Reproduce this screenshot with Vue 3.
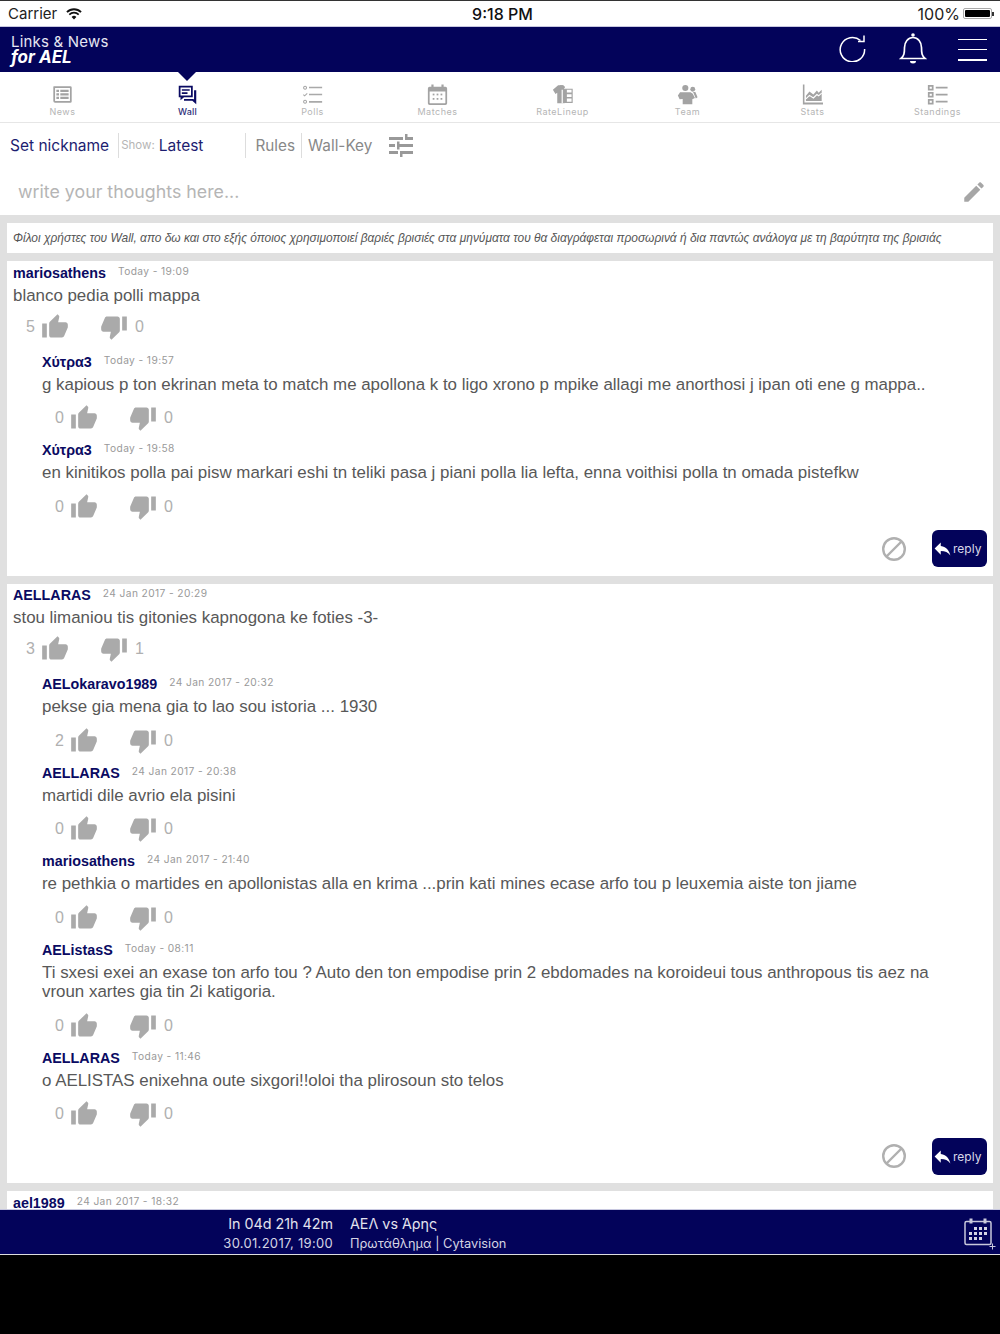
<template>
  <div class="app">
    <div class="status">
      <span class="carrier">Carrier</span>
      <svg class="wifi" viewBox="0 0 16 12"><path d="M8 11.5 5.6 8.9a3.4 3.4 0 0 1 4.8 0zM3.9 7.2 2.7 5.9a7.6 7.6 0 0 1 10.6 0l-1.2 1.3a5.9 5.9 0 0 0-8.2 0zM1.6 4.8.3 3.5a11 11 0 0 1 15.4 0l-1.3 1.3a9.2 9.2 0 0 0-12.8 0z" fill="#111"/></svg>
      <span class="clock">9:18 PM</span>
      <span class="pct">100%</span>
      <span class="battery"><i></i></span>
    </div>

    <header class="topbar">
      <div class="brand">
        <div>Links &amp; News</div>
        <div class="brand-sub">for AEL</div>
      </div>
      <svg class="refresh" viewBox="0 0 27 28" fill="none" stroke="#fff" stroke-width="1.5"><path d="M21.5 6.5A12.2 12.2 0 1 0 25.6 15"/><path d="M25 1.5v6h-6"/></svg>
      <svg class="bell" viewBox="0 0 28 32" fill="none" stroke="#fff" stroke-width="1.7"><path d="M2 26.5c3-2.6 3.5-5 3.5-11 0-5.500 3.500-10 8.500-10s8.500 4.500 8.500 10c0 6 .5 8.400 3.500 11z"/><circle cx="14" cy="3" r="1.8" fill="#fff" stroke="none"/><path d="M11 29h6a3 2.5 0 0 1-6 0z" fill="#fff" stroke="none"/></svg>
      <div class="burger"><i></i><i></i><i></i></div>
    </header>

    <nav class="tabs">
      <div v-for="t in tabs" :key="t.name" class="tab" :class="{ active: t.name === 'Wall' }">
        <svg class="tab-icon" viewBox="0 0 24 24" v-html="t.icon"></svg>
        <span>{{ t.name }}</span>
      </div>
    </nav>

    <div class="toolbar">
      <span class="link nick">Set nickname</span>
      <span class="sep"></span>
      <span class="show">Show:</span>
      <span class="link latest">Latest</span>
      <span class="sep sep-b"></span>
      <span class="plain rules">Rules</span>
      <span class="sep sep-c"></span>
      <span class="plain">Wall-Key</span>
      <svg class="tune" viewBox="0 0 24 24" fill="#999">
        <rect x="0" y="4" width="14" height="3"/><rect x="16" y="1" width="2.5" height="6"/><rect x="16" y="4" width="8" height="3"/>
        <rect x="0" y="11" width="6" height="3"/><rect x="8" y="8.5" width="2.5" height="8"/><rect x="8" y="11" width="16" height="3"/>
        <rect x="0" y="18" width="9" height="3"/><rect x="11" y="18" width="2.5" height="6"/><rect x="11" y="18" width="13" height="3"/>
      </svg>
    </div>

    <div class="compose">
      <span>write your thoughts here...</span>
      <svg class="pencil" viewBox="0 0 24 24" fill="#a6a6a6"><path d="M3 17.25V21h3.75L17.81 9.94l-3.75-3.75L3 17.25zM20.71 7.04c.39-.39.39-1.02 0-1.41l-2.34-2.34c-.39-.39-1.02-.39-1.41 0l-1.83 1.83 3.75 3.75 1.83-1.83z"/></svg>
    </div>

    <main class="wall">
      <div class="notice">Φίλοι χρήστες του Wall, απο δω και στο εξής όποιος χρησιμοποιεί βαριές βρισιές στα μηνύματα του θα διαγράφεται προσωρινά ή δια παντώς ανάλογα με τη βαρύτητα της βρισιάς</div>

      <section v-for="p in posts" :key="p.name + p.time" class="post">
        <article class="msg">
          <div class="head"><b>{{ p.name }}</b><time>{{ p.time }}</time></div>
          <template v-if="p.text">
            <p>{{ p.text }}</p>
            <div class="votes">
              <span class="n-up">{{ p.up }}</span>
              <svg viewBox="0 0 24 24"><path :d="thumbUp"/></svg>
              <svg class="down" viewBox="0 0 24 24"><path :d="thumbDown"/></svg>
              <span class="n-down">{{ p.down }}</span>
            </div>
          </template>
        </article>
        <article v-for="c in p.replies" :key="c.name + c.time" class="msg sub">
          <div class="head"><b>{{ c.name }}</b><time>{{ c.time }}</time></div>
          <p>{{ c.text }}</p>
          <div class="votes">
            <span class="n-up">{{ c.up }}</span>
            <svg viewBox="0 0 24 24"><path :d="thumbUp"/></svg>
            <svg class="down" viewBox="0 0 24 24"><path :d="thumbDown"/></svg>
            <span class="n-down">{{ c.down }}</span>
          </div>
        </article>
        <div v-if="p.text" class="actions">
          <svg class="ban" viewBox="0 0 26 26" fill="none" stroke="#b0b0b0" stroke-width="2.4"><circle cx="13" cy="13" r="10.8"/><path d="M5.5 20.5 20.5 5.5"/></svg>
          <button class="reply">
            <svg viewBox="0 0 24 24" fill="#fff"><path d="M10 9V5l-7 7 7 7v-4.1c5 0 8.5 1.6 11 5.1-1-5-4-10-11-11z"/></svg>
            reply
          </button>
        </div>
      </section>
    </main>

    <footer class="next">
      <div class="when">
        <div class="big">In 04d 21h 42m</div>
        <div class="small">30.01.2017, 19:00</div>
      </div>
      <div class="what">
        <div class="big">ΑΕΛ vs Άρης</div>
        <div class="small">Πρωτάθλημα | Cytavision</div>
      </div>
      <svg class="cal" viewBox="0 0 32 32" fill="none" stroke="#c9c9dc">
        <rect x="1" y="3.5" width="26" height="23" rx="1.5" stroke-width="1.5"/>
        <path d="M7 .5v5M21 .5v5" stroke-width="3"/>
        <g fill="#d5d5e4" stroke="none">
          <rect x="10" y="9" width="3" height="3"/><rect x="15" y="9" width="3" height="3"/><rect x="20" y="9" width="3" height="3"/>
          <rect x="5" y="14" width="3" height="3"/><rect x="10" y="14" width="3" height="3"/><rect x="15" y="14" width="3" height="3"/><rect x="20" y="14" width="3" height="3"/>
          <rect x="5" y="19" width="3" height="3"/><rect x="10" y="19" width="3" height="3"/><rect x="15" y="19" width="3" height="3"/>
        </g>
        <path d="M28.5 25.5v6M25.5 28.5h6" stroke-width="1"/>
      </svg>
    </footer>
    <div class="black"></div>
  </div>
</template>

<script setup>
const thumbUp = 'M1 21h4V9H1v12zm22-11c0-1.1-.9-2-2-2h-6.31l.95-4.57.03-.32c0-.41-.17-.79-.44-1.06L14.17 1 7.59 7.59C7.22 7.95 7 8.45 7 9v10c0 1.1.9 2 2 2h9c.83 0 1.54-.5 1.84-1.22l3.02-7.05c.09-.23.14-.47.14-.73v-2z'
const thumbDown = 'M15 3H6c-.83 0-1.54.5-1.84 1.22l-3.02 7.05c-.09.23-.14.47-.14.73v2c0 1.1.9 2 2 2h6.31l-.95 4.57-.03.32c0 .41.17.79.44 1.06L9.83 23l6.59-6.59c.36-.36.58-.86.58-1.41V5c0-1.1-.9-2-2-2zm4 0v12h4V3h-4z'

const g = 'fill="#a3a3a3"'
const tabs = [
  { name: 'News', icon: `<path ${g} fill-rule="evenodd" d="M2 2.5h19a1.5 1.5 0 0 1 1.5 1.5v16a1.5 1.5 0 0 1-1.5 1.5H3.5a2 2 0 0 1-2-2V3zM3.500 4.500v15h17v-15z"/><path ${g} d="M5 6.500h3V9H5zM9.500 6.500H19V9H9.500zM5 10.500h3V13H5zM9.500 10.500H19V13H9.500zM5 14.500h3V17H5zM9.500 14.500H19V17H9.500z"/>` },
  { name: 'Wall', icon: `<path fill="#0a0a62" fill-rule="evenodd" d="M2 2h16v13H8l-4 3.500V15H2zM4 4v9h12V4z"/><path fill="#0a0a62" d="M5.500 6h9v1.800h-9zM5.500 9.500H12v1.800H5.500zM19.500 7H22v16l-4.500-4H8v-2h10.500l1 .8z"/>` },
  { name: 'Polls', icon: `<path fill="none" stroke="#a9a9a9" stroke-width="1.200" d="M3.500 2.500a1.700 1.700 0 1 0 .01 0zM3.500 18.500a1.700 1.700 0 1 0 .01 0zM1.500 12.200 3 13.500l3-2.800"/><path fill="#a9a9a9" d="M8 3h15v1.800H8zM8 11h15v1.800H8zM8 19.500h15v1.800H8z"/>` },
  { name: 'Matches', icon: `<path ${g} fill-rule="evenodd" d="M5 .5h2.500V3h9V.5H19V3h2a2 2 0 0 1 2 2v17a2 2 0 0 1-2 2H3a2 2 0 0 1-2-2V5a2 2 0 0 1 2-2h2zM3 8.500v13a.5.5 0 0 0 .5.5h17a.5.5 0 0 0 .5-.5v-13z"/><g fill="#a3a3a3"><rect x="6.500" y="11" width="2" height="2"/><rect x="11" y="11" width="2" height="2"/><rect x="15.500" y="11" width="2" height="2"/><rect x="6.500" y="16" width="2" height="2"/><rect x="11" y="16" width="2" height="2"/><rect x="15.500" y="16" width="2" height="2"/></g>` },
  { name: 'RateLineup', icon: `<path ${g} d="M7 1.500h6l1.500 1.500v19H6V10l-2 1.500-3-5z"/><path fill="#fff" d="M11 4.500h13V22H11z"/><path fill="none" stroke="#a3a3a3" stroke-width="1.300" d="M13 6h10v4.500H13zM13 11h10v4.500H13zM13 16h10v5H13z"/><path ${g} d="M9 1.500h3L14.500 3l-1 3.500H9zM13 6h4v4.500h-4zM13 11h4v4.500h-4zM13 16h4v5h-4z"/>` },
  { name: 'Team', icon: `<circle ${g} cx="9.500" cy="4.500" r="3.500"/><circle ${g} cx="18" cy="6" r="2.800"/><path ${g} d="M3.500 9.500h12l2.500 1.500 2.500 5-3 1.500V23H6.500v-6L3 17.500 1 13zM18 9h3l2.500 6-2 1.500-3-7z"/>` },
  { name: 'Stats', icon: `<path ${g} d="M1 .5h1.800V21H24v2.500H1z"/><path ${g} d="M4.500 19.500v-6l4-5 4.500 3.500 4-4.500 2 2.500L22.500 6.500v13z"/><path fill="none" stroke="#fff" stroke-width="1.300" d="M4.500 17l4-4 4.500 3 4-4 2 1.500 3.500-3"/>` },
  { name: 'Standings', icon: `<g fill="#a3a3a3"><path fill-rule="evenodd" d="M1 1h6.500v6.500H1zM3 3v2.500h2.500V3z"/><path fill-rule="evenodd" d="M1 9h6.500v6.500H1zM3 11v2.500h2.500V11z"/><path fill-rule="evenodd" d="M1 17h6.500v6.500H1zM3 19v2.500h2.500V19z"/><path d="M10 3.200h13.500V5H10zM10 11.200h13.500V13H10zM10 19.200h13.500V21H10z"/></g>` }
]

const posts = [
  {
    name: 'mariosathens', time: 'Today - 19:09', text: 'blanco pedia polli mappa', up: 5, down: 0,
    replies: [
      { name: 'Χύτρα3', time: 'Today - 19:57', text: 'g kapious p ton ekrinan meta to match me apollona k to ligo xrono p mpike allagi me anorthosi j ipan oti ene g mappa..', up: 0, down: 0 },
      { name: 'Χύτρα3', time: 'Today - 19:58', text: 'en kinitikos polla pai pisw markari eshi tn teliki pasa j piani polla lia lefta, enna voithisi polla tn omada pistefkw', up: 0, down: 0 }
    ]
  },
  {
    name: 'AELLARAS', time: '24 Jan 2017 - 20:29', text: 'stou limaniou tis gitonies kapnogona ke foties -3-', up: 3, down: 1,
    replies: [
      { name: 'AELokaravo1989', time: '24 Jan 2017 - 20:32', text: 'pekse gia mena gia to lao sou istoria ... 1930', up: 2, down: 0 },
      { name: 'AELLARAS', time: '24 Jan 2017 - 20:38', text: 'martidi dile avrio ela pisini', up: 0, down: 0 },
      { name: 'mariosathens', time: '24 Jan 2017 - 21:40', text: 're pethkia o martides en apollonistas alla en krima ...prin kati mines ecase arfo tou p leuxemia aiste ton jiame', up: 0, down: 0 },
      { name: 'AEListasS', time: 'Today - 08:11', text: 'Ti sxesi exei an exase ton arfo tou ? Auto den ton empodise prin 2 ebdomades na koroideui tous anthropous tis aez na vroun xartes gia tin 2i katigoria.', up: 0, down: 0 },
      { name: 'AELLARAS', time: 'Today - 11:46', text: 'o AELISTAS enixehna oute sixgori!!oloi tha plirosoun sto telos', up: 0, down: 0 }
    ]
  },
  { name: 'ael1989', time: '24 Jan 2017 - 18:32', text: '', replies: [] }
]
</script>

<style>
html, body { margin: 0; background: #000; }
</style>

<style scoped>
.app {
  width: 1000px;
  height: 1334px;
  display: flex;
  flex-direction: column;
  overflow: hidden;
  font-family: "Liberation Sans", Arial, sans-serif;
  background: #fff;
}

.status {
  height: 25px;
  flex: none;
  display: flex;
  align-items: center;
  position: relative;
  border-top: 1px solid #333;
  border-bottom: 1px solid #c8c8e0;
  padding: 0 8px;
  font-family: Inter, sans-serif;
  font-size: 15px;
  color: #222;
}
.wifi { width: 16px; height: 12px; margin-left: 9px; }
.clock {
  position: absolute;
  left: 0;
  right: 0;
  padding-left: 5px;
  text-align: center;
  font-size: 16px;
  font-weight: 500;
  color: #111;
}
.pct { margin-left: auto; margin-right: 3px; font-size: 16px; }
.battery {
  width: 29px;
  height: 11px;
  border: 1px solid #aaa;
  border-radius: 2px;
  padding: 1px;
  box-sizing: border-box;
  position: relative;
}
.battery i { display: block; height: 100%; background: #000; border-radius: 1px; }
.battery::after {
  content: "";
  position: absolute;
  right: -3px;
  top: 3px;
  width: 2px;
  height: 4px;
  background: #333;
}

.topbar {
  height: 45px;
  flex: none;
  display: flex;
  align-items: center;
  background: #03035a;
  color: #fff;
  padding: 0 13px 0 11px;
}
.brand {
  font-family: Inter, sans-serif;
  font-size: 15px;
  line-height: 16px;
  letter-spacing: .2px;
  color: #e6e6f2;
  margin-right: auto;
}
.brand-sub { font-size: 17px; line-height: 15px; font-weight: 700; font-style: italic; color: #fff; letter-spacing: 0; }
.refresh { width: 27px; height: 28px; margin: 0 33px 4px 0; }
.bell { width: 28px; height: 32px; margin: 0 31px 3px 0; }
.burger { width: 29px; height: 22px; display: flex; flex-direction: column; justify-content: space-between; }
.burger i { height: 1.5px; background: #fff; }

.tabs {
  height: 50px;
  flex: none;
  display: grid;
  grid-template-columns: repeat(8, 125px);
  border-bottom: 1px solid #e6e6e6;
}
.tab {
  display: flex;
  flex-direction: column;
  align-items: center;
  padding-top: 12px;
  font-family: Inter, sans-serif;
  font-size: 9px;
  line-height: 10px;
  letter-spacing: .5px;
  color: #b5b5b5;
  position: relative;
}
.tab-icon { width: 21px; height: 21px; margin-bottom: 2px; }
.tab.active { color: #2c2c78; font-weight: 500; letter-spacing: .2px; }
.tab.active::before {
  content: "";
  position: absolute;
  top: 0;
  left: 53px;
  border: 9px solid transparent;
  border-bottom: 0;
  border-top-color: #03035a;
}

.toolbar {
  height: 44px;
  flex: none;
  display: flex;
  align-items: center;
  padding: 0 0 1px 10px;
  font-family: Inter, sans-serif;
  font-size: 15.5px;
}
.link { color: #1d1d70; }
.sep { width: 1px; height: 25px; background: #ddd; margin: 0 2px 0 9px; }
.sep-b { margin: 0 9px 0 42px; }
.sep-c { margin: 0 6px; }
.show { font-size: 11.5px; color: #b5b5b5; margin-right: 4px; }
.plain { color: #888; font-size: 15.3px; }
.tune { width: 24px; height: 24px; margin-left: 17px; }

.compose {
  height: 47px;
  flex: none;
  display: flex;
  align-items: center;
  justify-content: space-between;
  padding: 0 13px 0 18px;
  font-family: Inter, sans-serif;
  font-size: 17.8px;
  color: #b5b5b5;
}
.pencil { width: 26px; height: 26px; }

.wall {
  height: 994px;
  flex: none;
  box-sizing: border-box;
  overflow: hidden;
  background: #e0e0e0;
  padding: 8px 7px 0;
}
.notice {
  height: 30px;
  line-height: 30px;
  background: #fff;
  padding-left: 6px;
  font-size: 11.94px;
  font-style: italic;
  color: #555;
  margin-bottom: 8px;
  white-space: nowrap;
}
.post { background: #fff; margin-bottom: 8px; padding-top: 1.5px; }
.msg { padding: 0 0 10px 6px; }
.sub { padding: 0 50px 7px 35px; }
.head { display: flex; align-items: baseline; height: 21px; line-height: 21px; }
.head b { font-size: 14.3px; color: #0a0a62; }
.head time {
  font-family: Inter, sans-serif;
  font-size: 10.2px;
  letter-spacing: .4px;
  color: #999;
  margin-left: 12px;
  position: relative;
  top: -3px;
}
p {
  margin: 0;
  font-size: 16.9px;
  line-height: 19.5px;
  color: #585858;
  padding-top: 2px;
}
.votes {
  display: flex;
  align-items: center;
  height: 30px;
  margin-top: 6.5px;
  font-size: 16px;
  color: #b0b0b0;
  fill: #aaa;
}
.votes svg { width: 28px; height: 28px; }
.n-up { width: 13px; margin-left: 13px; margin-right: 2px; }
.votes .down { margin-left: 31px; }
.n-down { margin-left: 7px; }
.sub .votes { margin-top: 9px; }

.actions {
  display: flex;
  align-items: center;
  justify-content: flex-end;
  padding: 0 6px 8.5px 0;
  margin-top: 1.5px;
}
.ban { width: 26px; height: 26px; margin-right: 25px; }
.reply {
  width: 55px;
  height: 37px;
  padding: 0;
  border: 0;
  border-radius: 6px;
  background: #03035a;
  color: #d8d8e8;
  font-family: Inter, sans-serif;
  font-size: 12px;
  display: flex;
  align-items: center;
}
.reply svg { width: 21px; height: 21px; }

.next {
  height: 44px;
  flex: none;
  display: flex;
  align-items: center;
  background: #03035a;
  color: #e2e2ee;
  border-top: 1px solid #c8c8e0;
  border-bottom: 1px solid #ddd;
  font-family: Inter, sans-serif;
}
.when { width: 333px; text-align: right; margin-right: 17px; padding-top: 2px; }
.what { padding-top: 2px; }
.big { font-size: 14.3px; line-height: 20px; }
.small { font-size: 13px; line-height: 19px; letter-spacing: .3px; color: #d5d5e4; }
.what .small { font-size: 12.8px; letter-spacing: 0; }
.cal { width: 32px; height: 32px; margin-left: auto; margin-right: 4px; margin-top: 4px; }

.black { flex: 1; background: #000; }
</style>
